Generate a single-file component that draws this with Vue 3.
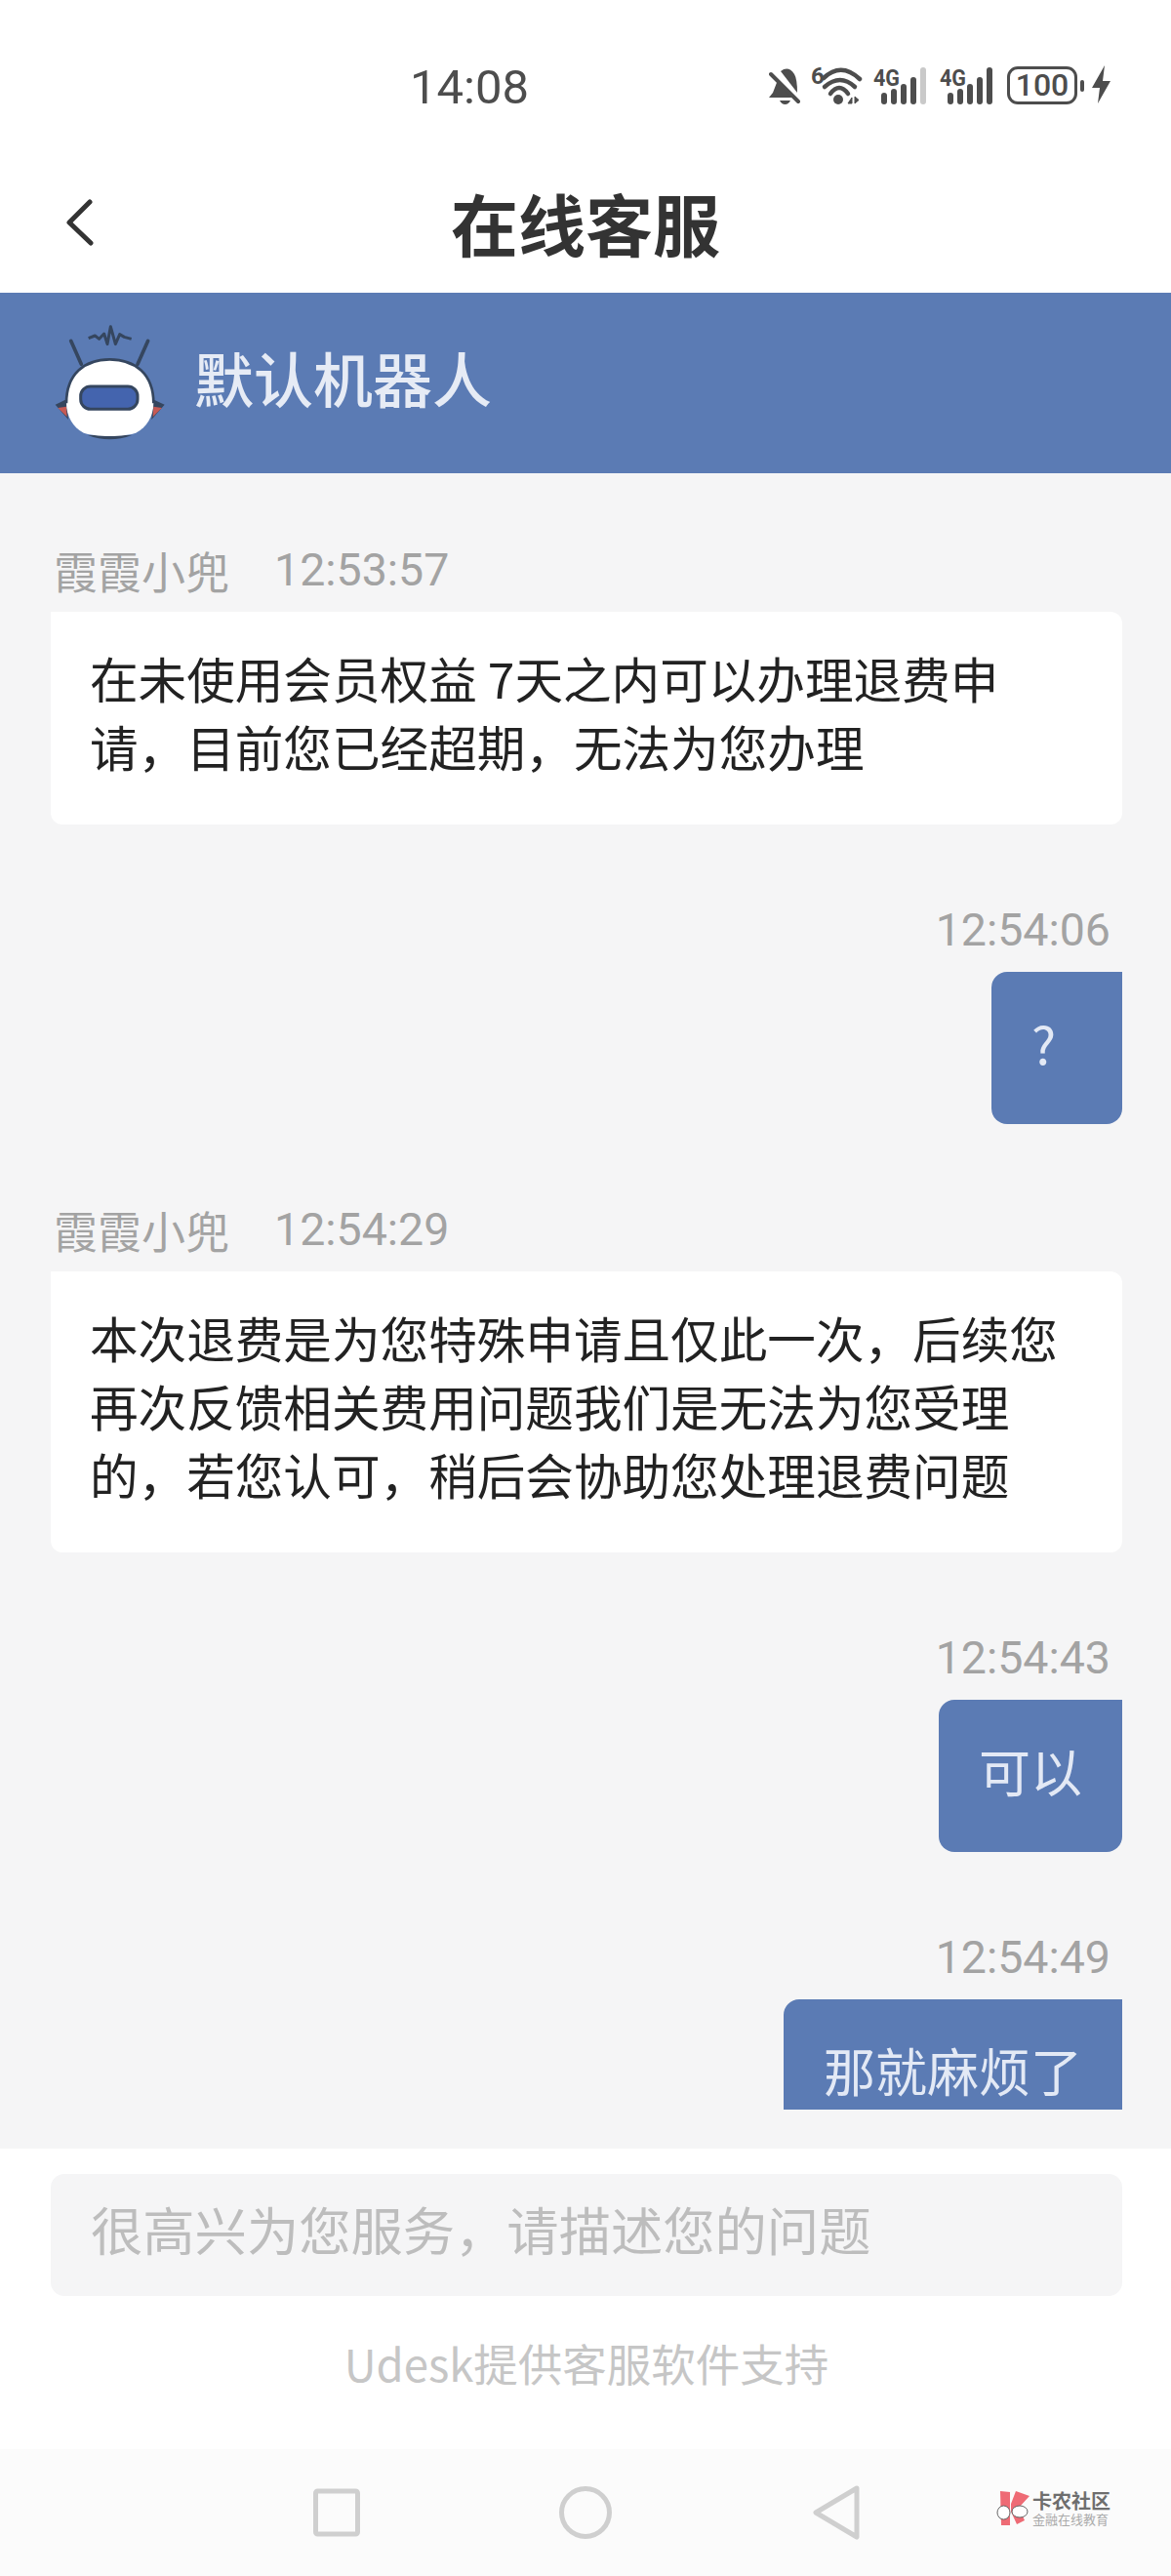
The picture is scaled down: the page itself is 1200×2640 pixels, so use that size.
<template>
  <div class="page">
    <div class="status">
      <span class="clock">14:08</span>
      <div class="status-icons">
        <svg width="32" height="44" viewBox="0 -6 32 44">
          <path d="M9 13 L24 31 L0 31 L4 26 Z" fill="#4d4d4d" />
          <path d="M12 4 Q20 -2 26 7 Q29 12 29 26 Z" fill="#4d4d4d" />
          <path d="M11 34 H22 Q20 38 16.5 38 Q13 38 11 34 Z" fill="#4d4d4d" />
          <path d="M2 7 L30 35" stroke="#4d4d4d" stroke-width="4" stroke-linecap="round" />
        </svg>
        <svg width="53" height="44" viewBox="0 -6 53 44">
          <text x="0" y="17" class="tiny">6</text>
          <path d="M13 11 Q31 -6 50 12" fill="none" stroke="#4d4d4d" stroke-width="4.5" stroke-linecap="round" />
          <path d="M14 20 Q30 6 45 20" fill="none" stroke="#4d4d4d" stroke-width="4.5" stroke-linecap="round" />
          <path d="M20 27 Q29 15 38 27" fill="none" stroke="#4d4d4d" stroke-width="4.5" stroke-linecap="round" />
          <circle cx="28" cy="33" r="5" fill="#4d4d4d" />
          <path d="M42 37 L42 31 L38 37 Z M45 30 L45 37 L49 33.5 Z" fill="#4d4d4d" stroke="#4d4d4d" stroke-width="1" />
        </svg>
        <svg v-for="(last, i) in signalEnds" :key="i" class="signal" width="55" height="44" viewBox="0 -6 55 44">
          <text x="0" y="19" class="tiny" textLength="27" lengthAdjust="spacingAndGlyphs">4G</text>
          <rect x="8" y="26" width="6" height="12" rx="3" fill="#4d4d4d" />
          <rect x="18" y="22" width="6" height="16" rx="3" fill="#4d4d4d" />
          <rect x="28" y="17" width="6" height="21" rx="3" fill="#4d4d4d" />
          <rect x="38" y="10" width="6" height="28" rx="3" fill="#4d4d4d" />
          <rect x="48" y="0" width="6" height="38" rx="3" :fill="last" />
        </svg>
        <div class="battery-wrap">
          <div class="battery">100</div>
          <span class="battery-tip"></span>
        </div>
        <svg class="bolt" width="19" height="40" viewBox="0 0 19 40">
          <path d="M13 0 L0 23 L8 23 L6 39 L19 16 L11 16 Z" fill="#4d4d4d" />
        </svg>
      </div>
    </div>

    <div class="topbar">
      <svg class="back" width="30" height="50" viewBox="0 0 30 50">
        <path d="M24 4 L3 25 L25 46" fill="none" stroke="#333" stroke-width="5" stroke-linecap="round" stroke-linejoin="round" />
      </svg>
      <h1>在线客服</h1>
    </div>

    <div class="agent-bar">
      <svg class="robot" width="140" height="140" viewBox="0 0 420 420">
        <path d="M98 88 L130 160 M335 88 L303 160" stroke="#35465f" stroke-width="11" stroke-linecap="round" />
        <path d="M152 80 L172 72 L185 82 L200 66 L210 98 L220 44 L235 98 L248 68 L262 76 L284 82" fill="none" stroke="#35465f" stroke-width="9" stroke-linejoin="round" />
        <path d="M50 284 L84 268 L90 330 Z M386 284 L350 268 L346 330 Z" fill="#35465f" />
        <path d="M58 294 L84 290 L86 322 Z M378 294 L352 290 L350 322 Z" fill="#c65a55" />
        <path d="M150 378 Q217 404 285 378 Z" fill="#35465f" />
        <path d="M84 280 C84 190 140 145 217 145 C295 145 352 190 352 280 C352 320 330 355 300 370 C265 385 170 385 135 370 C105 355 84 320 84 280 Z" fill="#fff" />
        <path d="M84 280 C84 190 140 145 217 145 C295 145 352 190 352 280" fill="none" stroke="#35465f" stroke-width="8" />
        <rect x="128" y="228" width="175" height="70" rx="30" fill="#4464ae" stroke="#35465f" stroke-width="9" />
      </svg>
      <span class="agent-name">默认机器人</span>
    </div>

    <div class="chat">
      <div class="chat-scroll">
        <div v-for="m in messages" :key="m.time" class="msg" :class="m.from ? 'left' : 'right'">
          <div class="meta">
            <span v-if="m.from" class="sender">{{ m.from }}</span>
            <span class="time">{{ m.time }}</span>
          </div>
          <div class="bubble">{{ m.text }}</div>
        </div>
      </div>
    </div>

    <div class="footer">
      <div class="input">很高兴为您服务，请描述您的问题</div>
      <div class="support">Udesk提供客服软件支持</div>
    </div>

    <div class="navbar">
      <svg class="nav-square" width="48" height="50" viewBox="0 0 48 50">
        <rect x="2.5" y="3" width="43" height="44" rx="2" fill="none" stroke="#cfcfcf" stroke-width="5" />
      </svg>
      <svg class="nav-circle" width="54" height="54" viewBox="0 0 54 54">
        <circle cx="27" cy="27" r="24.5" fill="none" stroke="#cfcfcf" stroke-width="5" />
      </svg>
      <svg class="nav-back" width="48" height="56" viewBox="0 0 48 56">
        <path d="M45 3 L3 28 L45 53 Z" fill="none" stroke="#cfcfcf" stroke-width="5" stroke-linejoin="round" />
      </svg>
      <div class="watermark">
        <svg width="36" height="38" viewBox="0 0 36 38">
          <path d="M5 1 L15 2 L15 36 L6 36 Z" fill="#ee6b75" />
          <path d="M16 14 L21 1 L35 6 L24 18 L30 31 L22 35 L16 22 Z" fill="#ee6b75" />
          <ellipse cx="8.5" cy="23" rx="6.5" ry="7" fill="#fff" stroke="#666" stroke-width="1" />
          <ellipse cx="25" cy="22" rx="8" ry="6" fill="#fff" stroke="#666" stroke-width="1" />
        </svg>
        <div class="wm-text">
          <span class="wm-main">卡农社区</span>
          <span class="wm-sub">金融在线教育</span>
        </div>
      </div>
    </div>
  </div>
</template>

<script setup>
const signalEnds = ['#c9c9c9', '#4d4d4d']

const messages = [
  { from: '霞霞小兜', time: '12:53:57', text: '在未使用会员权益 7天之内可以办理退费申请，目前您已经超期，无法为您办理' },
  { time: '12:54:06', text: '?' },
  { from: '霞霞小兜', time: '12:54:29', text: '本次退费是为您特殊申请且仅此一次，后续您再次反馈相关费用问题我们是无法为您受理的，若您认可，稍后会协助您处理退费问题' },
  { time: '12:54:43', text: '可以' },
  { time: '12:54:49', text: '那就麻烦了' },
]
</script>

<style>
html,
body {
  margin: 0;
  background: #fff;
}
</style>

<style scoped>
.page {
  width: 1200px;
  height: 2640px;
  overflow: hidden;
  background: #fff;
  font-family: "Noto Sans CJK SC", "Noto Sans", sans-serif;
  display: flex;
  flex-direction: column;
}

.status {
  height: 155px;
  flex: none;
  display: flex;
  align-items: flex-start;
  padding: 64px 62px 0 420px;
  box-sizing: border-box;
  justify-content: space-between;
}

.clock {
  font-family: Roboto, sans-serif;
  font-size: 49px;
  line-height: 52px;
  color: #4d4d4d;
}

.status-icons {
  display: flex;
  align-items: flex-end;
  gap: 11px;
  margin-top: -1px;
}

.signal + .signal {
  margin-left: 2px;
}

.tiny {
  font-family: Roboto, sans-serif;
  font-size: 24px;
  font-weight: 700;
  fill: #4d4d4d;
}

.battery-wrap {
  display: flex;
  align-items: center;
  gap: 3px;
  margin-left: 3px;
}

.battery {
  width: 72px;
  height: 39px;
  box-sizing: border-box;
  border: 3px solid #4d4d4d;
  border-radius: 11px;
  font-family: Roboto, sans-serif;
  font-size: 32px;
  line-height: 33px;
  font-weight: 500;
  text-align: center;
  color: #4d4d4d;
}

.battery-tip {
  width: 4px;
  height: 12px;
  background: #4d4d4d;
  border-radius: 2px;
}

.bolt {
  margin-left: -3px;
}

.topbar {
  height: 145px;
  flex: none;
  position: relative;
  display: flex;
  align-items: center;
  justify-content: center;
}

.back {
  position: absolute;
  left: 68px;
  top: 48px;
}

h1 {
  margin: 0;
  font-size: 69px;
  font-weight: 700;
  line-height: 80px;
  color: #333;
}

.agent-bar {
  height: 185px;
  flex: none;
  background: #5b7bb4;
  display: flex;
  align-items: center;
  padding-left: 40px;
  gap: 19px;
}

.robot {
  margin-top: -5px;
}

.agent-name {
  font-size: 61px;
  font-weight: 500;
  line-height: 70px;
  color: #e6ebf5;
  margin-top: -12px;
}

.chat {
  height: 1717px;
  flex: none;
  background: #f5f5f6;
}

.chat-scroll {
  height: 1677px;
  overflow: hidden;
  padding: 78px 50px 0 52px;
  box-sizing: border-box;
  display: flex;
  flex-direction: column;
  gap: 87px;
}

.msg {
  display: flex;
  flex-direction: column;
  flex: none;
}

.right {
  align-items: flex-end;
}

.meta {
  display: flex;
  height: 42px;
  margin-bottom: 22px;
  align-items: center;
  gap: 46px;
  padding-left: 3px;
  font-size: 45px;
  color: #a3a3a3;
}

.right .meta {
  padding: 0 12px 0 0;
}

.time {
  font-family: Roboto, "Noto Sans CJK SC", sans-serif;
  font-size: 46.5px;
}

.bubble {
  background: #fff;
  border-radius: 0 12px 12px 12px;
  padding: 32px 40px 46px;
  font-size: 49.6px;
  line-height: 70px;
  color: #222;
}

.right .bubble {
  background: #5b7bb4;
  color: #e3e9f5;
  min-width: 52px;
  padding: 37px 41px 49px;
  font-size: 53px;
  border-radius: 16px 0 16px 16px;
}

.footer {
  height: 308px;
  box-sizing: border-box;
  flex: none;
  padding: 26px 50px 0 52px;
}

.input {
  height: 125px;
  background: #f5f5f6;
  border-radius: 14px;
  padding-left: 41px;
  font-size: 53.3px;
  line-height: 112px;
  color: #bdbdbd;
}

.support {
  margin-top: 40px;
  text-align: center;
  font-size: 45.5px;
  line-height: 56px;
  color: #c6c6c6;
}

.navbar {
  flex: 1;
  background: #fbfbfb;
  position: relative;
  display: flex;
  align-items: center;
  padding-left: 321px;
}

.nav-circle {
  margin-left: 204px;
}

.nav-back {
  margin-left: 206px;
}

.watermark {
  position: absolute;
  left: 1020px;
  top: 42px;
  display: flex;
  gap: 2px;
  align-items: flex-start;
}

.wm-text {
  display: flex;
  flex-direction: column;
}

.wm-main {
  font-size: 20px;
  line-height: 22px;
  font-weight: 700;
  color: #6e6e6e;
}

.wm-sub {
  font-size: 13px;
  line-height: 16px;
  color: #aaa;
}
</style>
